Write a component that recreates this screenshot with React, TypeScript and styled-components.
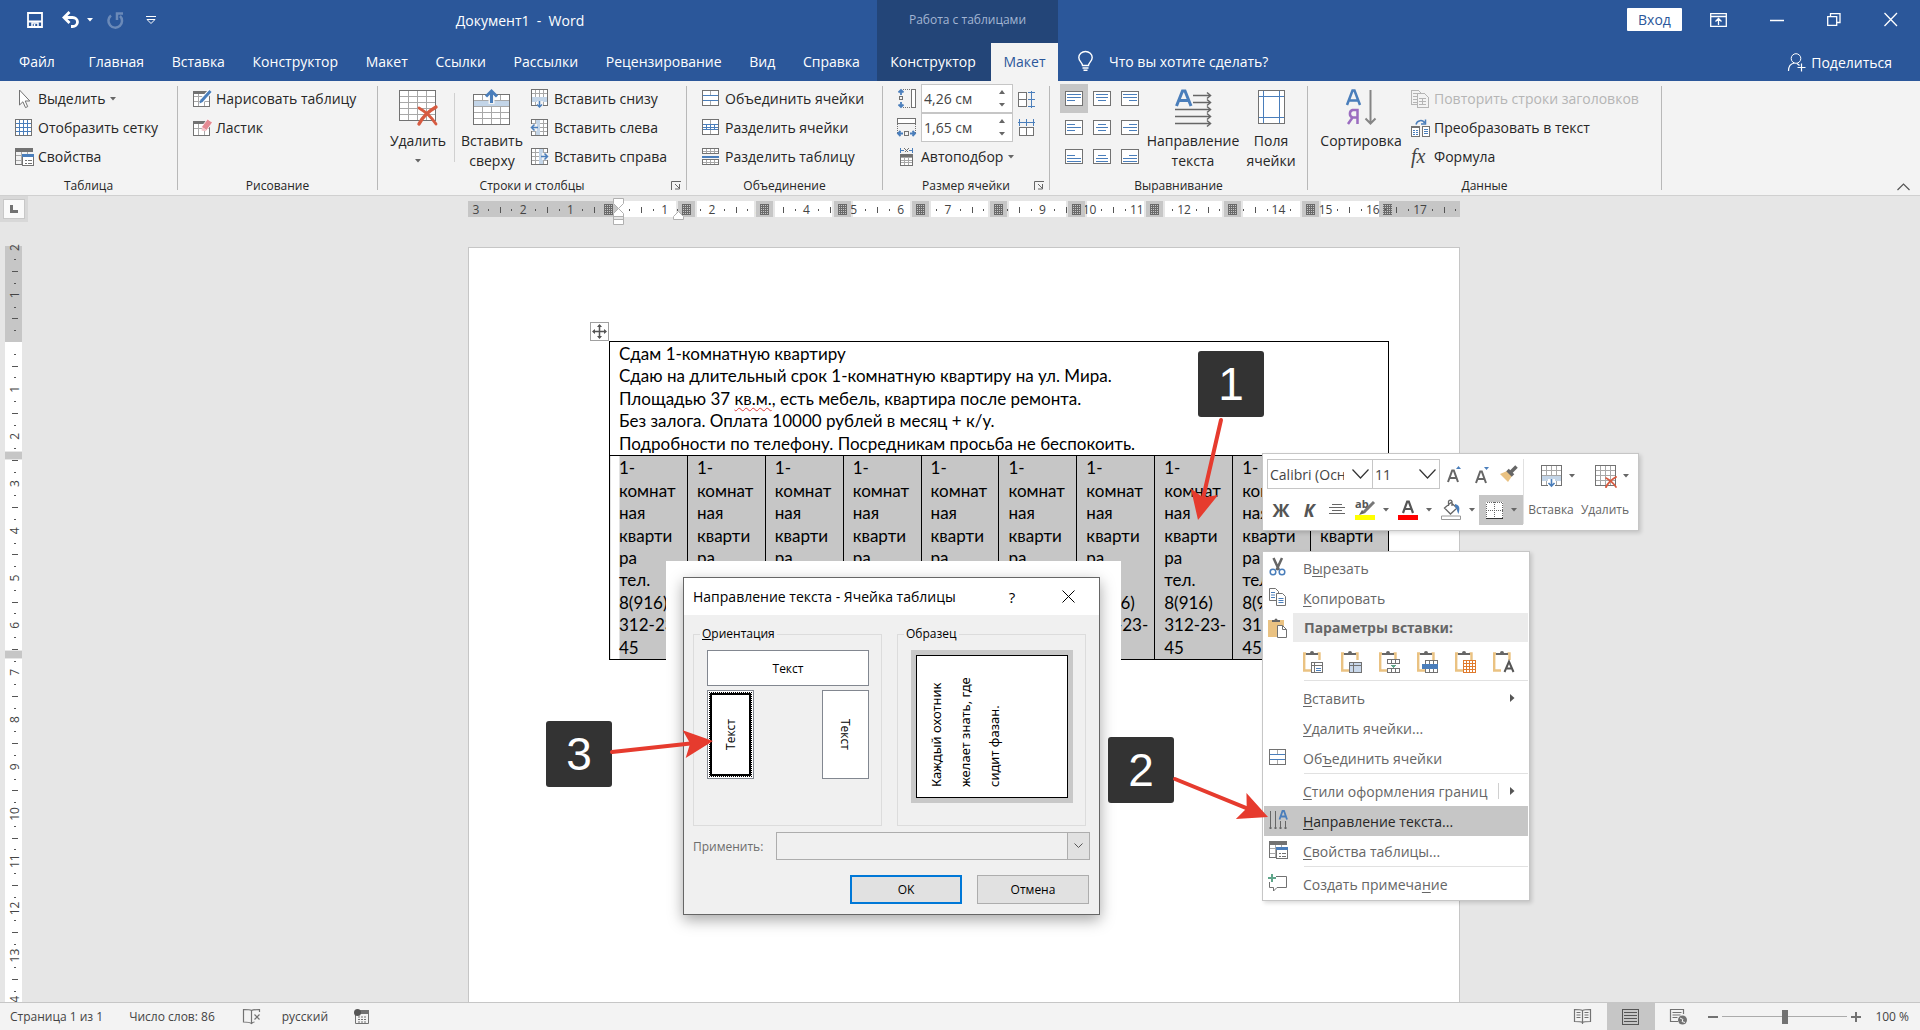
import React from "react";
import styled, { createGlobalStyle, css } from "styled-components";

const GREY = "#727272";
const LIGHT = "#a8a8a8";
const BLUE = "#4a7ebb";
const SANS = "'Open Sans', 'Noto Sans', sans-serif";

const GlobalStyle = createGlobalStyle`
  * { box-sizing: border-box; }
  body { margin: 0; background: #e6e6e6; font-family: ${SANS}; font-size: 14px; color: #262626; }
  button, input, select { font: inherit; color: inherit; margin: 0; }
  button { padding: 0; border: 0; background: none; cursor: default; }
  fieldset { margin: 0; min-width: 0; }
`;

/* ---------- icon helpers ---------- */

const Svg = styled.svg`
  display: block;
  flex: none;
  overflow: visible;
  fill: none;
`;

type IconProps = { w: number; h: number; children: React.ReactNode; crisp?: boolean };
const Icon = ({ w, h, children, crisp }: IconProps) => (
  <Svg width={w} height={h} viewBox={`0 0 ${w} ${h}`} shapeRendering={crisp ? "crispEdges" : undefined} aria-hidden>
    {children}
  </Svg>
);

/** Table outline with evenly spaced inner rules. */
const Cells = ({ x = 0, y = 0, w, h, c, r, fill = "#fff", inner = LIGHT, outer = GREY }: {
  x?: number; y?: number; w: number; h: number; c: number; r: number; fill?: string; inner?: string; outer?: string;
}) => {
  let d = "";
  for (let i = 1; i < c; i++) d += `M${x + Math.round(((w - 1) * i) / c) + 0.5} ${y}v${h}`;
  for (let i = 1; i < r; i++) d += `M${x} ${y + Math.round(((h - 1) * i) / r) + 0.5}h${w}`;
  return (
    <>
      <rect x={x + 0.5} y={y + 0.5} width={w - 1} height={h - 1} fill={fill} />
      <path d={d} stroke={inner} />
      <rect x={x + 0.5} y={y + 0.5} width={w - 1} height={h - 1} stroke={outer} />
    </>
  );
};

const Caret = ({ color = "#666" }: { color?: string }) => (
  <Icon w={6} h={4}><path d="M0 0h6L3 3.6z" fill={color} /></Icon>
);
const CursorIcon = () => (
  <Icon w={18} h={20}><path d="M4.500 1v15l3.400-3.200 2.600 5.800 2.200-1-2.500-5.600h4.600z" fill="#fff" stroke={GREY} /></Icon>
);
const GridIcon = () => <Icon w={18} h={18} crisp><Cells w={17} h={17} c={4} r={4} inner={BLUE} /></Icon>;
const PropsIcon = () => (
  <Icon w={19} h={18} crisp>
    <path d="M.5 1v15.500h8M1 7.500h7M1 12h7M6 4v12M12 3v3" stroke={LIGHT} />
    <path d="M.5 1v15.500h6" stroke={GREY} />
    <path d="M0 0h18v4H0z" fill={GREY} />
    <path d="M7.500 6.500h11v11h-11z" fill="#fff" stroke={GREY} />
    <path d="M7 6h12v3H7z" fill={BLUE} />
    <path d="M10 12h2M13 12h4M10 15h2M13 15h4" stroke={GREY} strokeWidth="1" />
  </Icon>
);
const DrawIcon = () => (
  <Icon w={19} h={18}>
    <g shapeRendering="crispEdges">
      <Cells y={1} w={17} h={16} c={3} r={3} />
      <path d="M0 1h17v3H0z" fill={GREY} />
    </g>
    <path d="M17.500 1 8.500 11" stroke="#fff" strokeWidth="5" />
    <path d="M17.500 1 8.500 11" stroke={BLUE} strokeWidth="3" />
    <path d="M6.500 13.500l1-4 2.700 2.200z" fill={BLUE} />
  </Icon>
);
const EraserIcon = () => (
  <Icon w={19} h={18}>
    <g shapeRendering="crispEdges">
      <Cells y={2} w={17} h={15} c={3} r={2} />
      <path d="M0 2h12v3H0z" fill={GREY} />
    </g>
    <path d="M8.500 8 14.500 0l5 3.500-6 8z" fill="#e58a93" stroke="#fff" strokeWidth=".8" />
    <path d="M9 8l4.500 3-1 1.200-4-.7z" fill="#f3c3c8" />
  </Icon>
);
const RedX = ({ x, y, s }: { x: number; y: number; s: number }) => (
  <g stroke="#d75b41" strokeLinecap="round">
    <path d={`M${x} ${y + 1}Q${x + s * 0.6} ${y + s * 0.4} ${x + s} ${y + s}`} strokeWidth={s / 6} />
    <path d={`M${x + s} ${y}Q${x + s * 0.3} ${y + s * 0.4} ${x} ${y + s}`} strokeWidth={s / 5} />
  </g>
);
const DeleteTableIcon = () => (
  <Icon w={38} h={38}>
    <g shapeRendering="crispEdges"><Cells y={1} w={37} h={31} c={4} r={5} /></g>
    <RedX x={20} y={18} s={17} />
  </Icon>
);
const InsertAboveIcon = () => (
  <Icon w={38} h={38} crisp>
    <Cells y={5} w={37} h={31} c={4} r={5} />
    <path d="M1 12h35v5H1z" fill="#c3d5e8" />
    <g shapeRendering="auto">
      <path d="M18.500 15V3" stroke="#f3f3f3" strokeWidth="6" />
      <path d="M18.500 14V2M13 7.500 18.500 2l5.500 5.500" stroke={BLUE} strokeWidth="3" />
    </g>
  </Icon>
);
const InsertBelowIcon = () => (
  <Icon w={18} h={19} crisp>
    <Cells w={17} h={17} c={4} r={4} />
    <path d="M1 8h15v5H1z" fill="#c3d5e8" />
    <path d="M6 12h6v7H6z" fill="#f3f3f3" />
    <path d="M8.500 12v6M6 15.500l2.500 2.500 2.500-2.500" stroke={BLUE} strokeWidth="1.500" shapeRendering="auto" />
  </Icon>
);
const InsertSideIcon = ({ flip }: { flip?: boolean }) => (
  <Icon w={18} h={18} crisp>
    <g transform={flip ? "translate(17 0) scale(-1 1)" : undefined}>
      <Cells w={17} h={17} c={4} r={4} />
      <path d="M5 1h4v15H5z" fill="#c3d5e8" />
      <path d="M0 5h6v7H0z" fill="#f3f3f3" />
      <path d="M7 8.500H.500M3.500 5.500l-3 3 3 3" stroke={BLUE} strokeWidth="1.500" shapeRendering="auto" />
    </g>
  </Icon>
);
const MergeIcon = () => (
  <Icon w={18} h={17} crisp>
    <path d="M.5.5h16v15H.5z" fill="#fff" stroke={GREY} />
    <path d="M8.500 1v4M8.500 11v4" stroke={LIGHT} />
    <path d="M1 5.500h15M1 10.500h15" stroke={BLUE} />
  </Icon>
);
const SplitIcon = () => (
  <Icon w={18} h={17} crisp>
    <path d="M.5.5h16v15H.5z" fill="#fff" stroke={GREY} />
    <path d="M8.500 1v4M8.500 11v4" stroke={LIGHT} />
    <path d="M1 5.500h15M1 10.500h15M4.500 6v4M8.500 6v4M12.500 6v4M1 8h15" stroke={BLUE} />
  </Icon>
);
const SplitTableIcon = () => (
  <Icon w={18} h={17} crisp>
    <Cells w={17} h={6} c={4} r={2} /><Cells y={11} w={17} h={6} c={4} r={2} />
    <path d="M0 8.500h17" stroke={BLUE} strokeWidth="2" />
  </Icon>
);
const RowHeightIcon = () => (
  <Icon w={19} h={19} crisp>
    <path d="M14.500.5h4v18h-4z" fill="#fff" stroke={GREY} />
    <path d="M6 .5h8M6 18.500h8" stroke={GREY} strokeDasharray="1 1" />
    <path d="M2.500 7.500h3v3h-3z" stroke={GREY} />
    <path d="M4 6V1M4 13v5M1.500 3.500 4 1l2.500 2.500M1.500 15.500 4 18l2.500-2.500" stroke={BLUE} strokeWidth="1.800" shapeRendering="auto" />
  </Icon>
);
const ColWidthIcon = () => (
  <Icon w={19} h={19} crisp>
    <path d="M.5.500h18v5H.5z" fill="#fff" stroke={GREY} />
    <path d="M.5 6v9M18.500 6v9" stroke={GREY} strokeDasharray="1 1" />
    <path d="M7.500 13.500h4v4h-4z" stroke={GREY} />
    <path d="M6 15.500H1M13 15.500h5M3.500 13 1 15.500 3.500 18M15.500 13l2.500 2.500-2.500 2.500" stroke={BLUE} strokeWidth="1.800" shapeRendering="auto" />
  </Icon>
);
const AutofitIcon = () => (
  <Icon w={19} h={18} crisp>
    <path d="M3.500 0v5M15.500 0v5M4 2.500h3M12 2.500h3" stroke={BLUE} />
    <path d="M7.500.5l4 4M11.500.5l-4 4" stroke={GREY} />
    <Cells x={3} y={6} w={13} h={12} c={3} r={4} />
    <path d="M3 6h13v3H3z" fill={GREY} />
  </Icon>
);
const DistRowsIcon = () => (
  <Icon w={17} h={18} crisp>
    <path d="M.5 2.500h8v14h-8zM.5 9.500h8" fill="#fff" stroke={GREY} />
    <path d="M13.500 1v17M10 2.500h7M10 9.500h7M10 16.500h7" stroke={BLUE} />
  </Icon>
);
const DistColsIcon = () => (
  <Icon w={17} h={18} crisp>
    <path d="M1.500 8.500h14v8h-14zM8.500 8.500v8" fill="#fff" stroke={GREY} />
    <path d="M0 3.500h17M1.500 0v7M8.500 0v7M15.500 0v7" stroke={BLUE} />
  </Icon>
);

/** Line lengths and the first line's height for the top, middle and bottom rows. */
const ALIGN_LINES = [[14, 14, 8], [8, 14, 8], [8, 14, 14]];
const ALIGN_TOP = [3.5, 4.5, 6.5];
const AlignIcon = ({ col, row }: { col: number; row: number }) => (
  <Icon w={18} h={15} crisp>
    <path d="M.5.5h17v14H.5z" fill="#fff" stroke={GREY} />
    {ALIGN_LINES[row].map((l, i) => {
      const len = col === 1 && l === 14 ? 12 : l;
      const x = [2, (18 - len) / 2, 16 - len][col];
      return <path key={i} d={`M${x} ${ALIGN_TOP[row] + i * 3 - (i === 2 ? 0 : 0)}h${len}`} stroke={BLUE} />;
    })}
  </Icon>
);
const TextDirIcon = () => (
  <Icon w={37} h={37}>
    <path d="M1.500 17 7.500 2h2.500L16 17M4 11.500h9.500" stroke={BLUE} strokeWidth="3" />
    <path d="M18 6.500h17M18 13.500h17M0 20.500h35M0 27.500h35M0 34.500h35" stroke="#666" strokeWidth="1.500" />
    <path d="M32 3.500l3.500 3-3.500 3M32 10.500l3.500 3-3.500 3M32 17.500l3.500 3-3.500 3M32 24.500l3.500 3-3.500 3M32 31.500l3.500 3-3.500 3" stroke="#666" strokeWidth="1.500" />
  </Icon>
);
const MarginsIcon = () => (
  <Icon w={27} h={35} crisp>
    <path d="M.5.5h26v33H.5z" fill="#fff" stroke={GREY} />
    <path d="M5.500 1v32M21.500 1v32M1 6.500h25M1 27.500h25" stroke={BLUE} />
  </Icon>
);
const SortIcon = () => (
  <Icon w={30} h={37}>
    <path d="M1 16 6.500 1.500h2L14 16M3.500 11.500h8" stroke={BLUE} strokeWidth="2.500" />
    <path d="M11.500 35V21H6.500a4 4 0 0 0 0 7.500h5M6.500 28.500 2 35" stroke="#9b6cc0" strokeWidth="2.500" />
    <path d="M24.500 1v33M19.500 29.500l5 5 5-5" stroke="#858585" strokeWidth="2" />
  </Icon>
);
const RepeatIcon = () => (
  <Icon w={18} h={18} crisp>
    <path d="M.5.5h7l3 3v11H.5z" fill="#f3f3f3" stroke="#b5b5b5" />
    <path d="M2 3.500h5M2 6.500h4M2 9.500h4M2 12.500h4" stroke="#b5b5b5" />
    <path d="M6.500 3.500h7l4 4v10h-11z" fill="#f3f3f3" stroke="#b5b5b5" />
    <path d="M8 8.500h7M8 11.500h7M8 14.500h7M11.500 8v7" stroke="#b5b5b5" />
  </Icon>
);
const ConvertIcon = () => (
  <Icon w={19} h={18}>
    <path d="M5 5.500C6 .8 12 .5 13.500 4M14.500.5V5h-4.500" stroke={BLUE} strokeWidth="1.500" />
    <g shapeRendering="crispEdges">
      <path d="M.5 7.500h8v10h-8zM11.500 7.500h7v10h-7z" fill="#fff" stroke={GREY} />
      <path d="M0 7h9v2H0z" fill={GREY} />
      <path d="M2 11.500h2M5 11.500h2M2 13.500h2M5 13.500h2M2 15.500h2M5 15.500h2M13 10.500h4M13 12.500h4M13 14.500h4" stroke={BLUE} />
    </g>
  </Icon>
);
const LauncherIcon = () => (
  <Icon w={10} h={9}><path d="M.5 9V.5H10M4 3l4.500 4.500M8.500 3v5H4" stroke="#666" /></Icon>
);
const ScissorsIcon = () => (
  <Icon w={19} h={20}>
    <path d="M4.500 1l5.500 12M13 1 7.500 13" stroke="#666" strokeWidth="2.500" />
    <circle cx="4" cy="15" r="2.800" stroke={BLUE} strokeWidth="1.500" />
    <circle cx="13" cy="15" r="2.800" stroke={BLUE} strokeWidth="1.500" />
  </Icon>
);
const CopyIcon = () => (
  <Icon w={19} h={19}>
    <path d="M.5.5h6l3 3v9h-9z" fill="#fff" stroke={GREY} />
    <path d="M2 4.500h4M2 7h4M2 9.500h4" stroke={BLUE} />
    <path d="M7.500 5.500h6l3 3v9h-9z" fill="#fff" stroke={GREY} />
    <path d="M9.500 10.500h5M9.500 12.500h5M9.500 14.500h5" stroke={BLUE} />
  </Icon>
);
const PasteIcon = () => (
  <Icon w={19} h={20}>
    <path d="M0 2h16v17H0z" fill="#eac282" />
    <path d="M4 4V2h2.500a1.500 1.500 0 0 1 3 0H12v2z" fill="#666" />
    <path d="M9.500 7.500h5l4 4v8h-9z" fill="#fff" stroke={GREY} />
    <path d="M14.500 7.500v4h4" stroke={GREY} />
  </Icon>
);
const PasteOption = ({ kind }: { kind: number }) => (
  <Icon w={21} h={23}>
    <path d="M3 3.500H1.200v17H8M14.500 3.500h2V10" stroke="#eac282" strokeWidth="2.400" />
    <path d="M3 5V3h4a2 2 0 0 1 4 0h4v2z" fill="#666" />
    <g shapeRendering="crispEdges">
      {kind === 0 && <><path d="M8.500 12.500h11v10h-11z" fill="#fff" stroke={GREY} /><path d="M9 15.500h10M11.500 13v9" stroke={GREY} /><path d="M13 18h5M13 20.500h5" stroke={BLUE} /></>}
      {kind === 1 && <><path d="M8.500 12.500h12v10h-12z" fill="#c8d7ea" stroke={GREY} /><path d="M9 15.500h11M12.500 13v9" stroke={GREY} /></>}
      {kind === 2 && <><Cells x={8} y={9} w={13} h={5} c={3} r={1} inner={GREY} /><Cells x={8} y={18} w={13} h={5} c={3} r={1} inner={GREY} /><path d="M12 15h5l-2.500 3z" fill="#5fa58a" /></>}
      {kind === 3 && <><Cells x={8} y={10} w={13} h={13} c={3} r={3} inner={GREY} /><path d="M5 14h16v5H5z" fill={BLUE} /></>}
      {kind === 4 && <Cells x={8} y={10} w={13} h={13} c={4} r={4} inner="#e07b2e" outer="#e07b2e" />}
    </g>
    {kind === 5 && <><path d="M9 10h12v13H9z" fill="#fff" /><path d="M11.500 22 16 11.500 20.500 22M13 18.500h6" stroke="#555" strokeWidth="2" /></>}
  </Icon>
);
const TextDirMenuIcon = () => (
  <Icon w={19} h={20}>
    <path d="M10.500 9.500l3-8.500h1.500l3 8.500M12 6.500h5" stroke={BLUE} strokeWidth="1.800" />
    <path d="M1.500 1v18M6.500 1v18M11.500 11v8M16.500 11v8M0 18h3M5 18h3M10 18h3M15 18h3" stroke="#666" />
  </Icon>
);
const CommentIcon = () => (
  <Icon w={20} h={19}>
    <path d="M7 2.500h10.500v11H8L4.500 17v-3.500h-4V8" stroke={GREY} />
    <path d="M3 0v8M-1 4h8" stroke="#5fa58a" strokeWidth="2" />
  </Icon>
);

/* ---------- header ---------- */

const Window = styled.div`
  display: flex;
  flex-direction: column;
  height: 100vh;
  overflow: hidden;
  background: #e6e6e6;
`;
const Header = styled.header`
  display: grid;
  grid-template-columns: 877px 181px 1fr;
  grid-template-rows: 43px 38px;
  flex: none;
  background: #2b579a;
  color: #fff;
`;
const TitleLeft = styled.div`
  display: flex;
  align-items: center;
  padding-bottom: 3px;
`;
const QuickAccess = styled.div`
  display: flex;
  align-items: center;
  width: 163px;
  padding-left: 27px;
  button + button { margin-left: 22px; }
`;
const UndoButton = styled.button`
  display: flex;
  align-items: center;
  gap: 7px;
  && { margin-left: 19px; }
`;
const RedoButton = styled.button`
  opacity: 0.3;
  && { margin-left: 14px; }
`;
const DocTitle = styled.h1`
  flex: 1;
  margin: 0;
  font-size: 14px;
  font-weight: 400;
  text-align: center;
  white-space: pre;
`;
const ContextTitle = styled.div`
  background: #234578;
  color: #a3b6d3;
  font-size: 12px;
  line-height: 40px;
  text-align: center;
`;
const WindowBar = styled.div`
  display: flex;
  align-items: center;
  justify-content: flex-end;
  gap: 43px;
  padding: 0 22px 4px 0;
`;
const SignIn = styled.button`
  width: 55px;
  height: 23px;
  margin-right: -15px;
  border-radius: 1px;
  background: #fff;
  color: #2b579a;
`;
const Tabs = styled.nav`
  display: flex;
  justify-content: space-between;
  padding: 0 17px 2px 19px;
`;
const ContextTabs = styled.nav`
  display: flex;
  background: #234578;
`;
const Tab = styled.button<{ $active?: boolean; $file?: boolean; $grow?: boolean }>`
  white-space: nowrap;
  ${(p) => p.$file && css`margin-right: 6px;`}
  ${(p) => p.$grow && css`flex: 1; padding: 0 2px 2px 0;`}
  ${(p) => p.$active && css`
    width: 67px;
    padding-bottom: 2px;
    background: #f3f3f3;
    color: #2b579a;
  `}
`;
const HelpBar = styled.div`
  display: flex;
  align-items: center;
  justify-content: space-between;
  padding: 0 28px 2px 20px;
`;
const TellMe = styled.label`
  display: flex;
  align-items: center;
  gap: 16px;
`;
const TellMeInput = styled.input`
  width: 200px;
  padding: 0;
  border: 0;
  background: none;
  &::placeholder { color: #fff; opacity: 1; }
`;
const Share = styled.button`
  display: flex;
  align-items: center;
  gap: 5px;
  padding-top: 2px;
`;

/* ---------- ribbon ---------- */

const Ribbon = styled.div`
  display: flex;
  flex: none;
  height: 115px;
  background: #f3f3f3;
  border-bottom: 1px solid #d0d0d0;
  white-space: nowrap;
`;
const Divider = styled.span`
  flex: none;
  width: 1px;
  margin: 5px 0;
  background: #b8b8b8;
`;
const InnerDivider = styled.span`
  width: 1px;
  margin: 9px 4px 10px;
  background: #d0d0d0;
`;
const Group = styled.section<{ $w: number }>`
  display: flex;
  flex-direction: column;
  flex: none;
  width: ${(p) => p.$w}px;
  padding-top: 3px;
`;
const GroupBody = styled.div<{ $pad: number }>`
  display: flex;
  height: 88px;
  padding-left: ${(p) => p.$pad}px;
`;
const GroupFoot = styled.div`
  display: flex;
  align-items: center;
  height: 23px;
  padding-top: 3px;
  font-size: 12px;
`;
const GroupName = styled.span`
  flex: 1;
  text-align: center;
`;
const Launcher = styled.button`
  width: 10px;
  margin: 0 5px 0 -15px;
`;
const Column = styled.div<{ $ml?: number }>`
  display: grid;
  grid-auto-rows: 29px;
  margin-left: ${(p) => p.$ml ?? 0}px;
`;
const Command = styled.button`
  display: flex;
  align-items: center;
  gap: 5px;
  text-align: left;
  &:disabled { color: #b5b5b5; }
`;
const IconSlot = styled.span`
  display: flex;
  width: 18px;
`;
const Fx = styled.span`
  width: 18px;
  color: #444;
  font: italic 20px 'Liberation Serif', serif;
`;
const Big = styled.button<{ $w: number }>`
  display: flex;
  flex-direction: column;
  align-items: center;
  width: ${(p) => p.$w}px;
  height: 88px;
  line-height: 20px;
`;
const BigIcon = styled.span`
  display: flex;
  align-items: center;
  height: 47px;
`;
const BigCaret = styled.span`
  padding-top: 8px;
`;
const SizeGrid = styled.div`
  display: grid;
  grid-template-columns: 19px 92px 17px;
  grid-auto-rows: 29px;
  column-gap: 5px;
  align-items: center;
`;
const Spin = styled.span`
  display: flex;
  height: 29px;
  border: 1px solid #c6c6c6;
  background: #fff;
`;
const SpinInput = styled.input`
  width: 70px;
  padding: 0 2px;
  border: 0;
  color: #444;
  background: none;
`;
const SpinButtons = styled.span`
  display: flex;
  flex: 1;
  flex-direction: column;
  align-items: center;
  justify-content: space-evenly;
  button { display: grid; place-items: center; width: 16px; height: 12px; }
`;
const AutofitButton = styled.button`
  display: flex;
  grid-column: 2 / 4;
  align-items: center;
  gap: 5px;
`;
const AlignGrid = styled.div`
  display: grid;
  grid-template-columns: repeat(3, 28px);
  grid-auto-rows: 29px;
`;
const AlignButton = styled.button<{ $on: boolean }>`
  display: grid;
  place-items: center;
  padding-bottom: 1px;
  background: ${(p) => (p.$on ? "#c6c6c6" : "none")};
`;
const Collapse = styled.button`
  align-self: flex-end;
  margin: 0 10px 4px auto;
`;

/* ---------- workspace ---------- */

const RulerRow = styled.div`
  display: flex;
  flex: none;
  height: 30px;
  padding-right: 20px;
`;
const TabCorner = styled.button`
  display: grid;
  flex: none;
  width: 28px;
  height: 26px;
  padding: 0 1px;
  place-items: center;
  background: #d8d8d8;
  span { display: grid; place-items: center; width: 22px; height: 20px; background: #fafafa; border: 1px solid #c8c8c8; }
`;
const RulerHolder = styled.div`
  display: flex;
  flex: 1;
  justify-content: center;
`;
const Work = styled.div`
  display: flex;
  flex: 1;
  min-height: 0;
  overflow: hidden;
`;
const SideRuler = styled.div`
  flex: none;
  width: 28px;
  padding-top: 20px;
`;
const Canvas = styled.main`
  display: flex;
  flex: 1;
  justify-content: center;
  padding: 22px 20px 0 0;
`;
const Sheet = styled.div`
  position: relative;
  width: 990px;
  padding: 93px 70px 0 140px;
  background: #fff;
  box-shadow: 0 0 0 1px #c6c6c6;
`;
const MoveHandle = styled.button`
  position: absolute;
  top: 74px;
  left: 121px;
  display: grid;
  place-items: center;
  width: 19px;
  height: 19px;
  border: 1px solid #a0a0a0;
  background: #fff;
`;
const DocTable = styled.table`
  width: 100%;
  table-layout: fixed;
  border-collapse: collapse;
  color: #000;
  font-family: Lato, 'Open Sans', sans-serif;
  font-size: 17px;
  line-height: 1.32;
  td { padding: 1px 9px 0; border: 1px solid #000; vertical-align: top; white-space: nowrap; }
`;
const Selected = styled.td<{ $first: boolean }>`
  background: ${(p) => (p.$first ? "linear-gradient(90deg, #fff 9px, #c6c6c6 9px)" : "#c6c6c6")};
`;
const Misspelt = styled.span`
  text-decoration: underline wavy #e03a3a 1px;
  text-underline-offset: 2px;
  text-decoration-skip-ink: none;
`;

const TICK = 47.2;
const HRuler = () => {
  const marks: React.ReactNode[] = [];
  for (let q = -12; q <= 71; q++) {
    const x = 617.6 + (q * TICK) / 4;
    if (q === 0 || x < 470) continue;
    if (q % 4 === 0) marks.push(<text key={q} x={x} y={214} textAnchor="middle" fontSize="12" fill="#444">{Math.abs(q / 4)}</text>);
    else if (q % 2 === 0) marks.push(<path key={q} d={`M${Math.round(x) + 0.5} 207v6`} stroke="#555" />);
    else marks.push(<path key={q} d={`M${Math.round(x) + 0.5} 209v2`} stroke="#555" />);
  }
  const stops = Array.from({ length: 9 }, (_, i) => 678 + i * 78);
  return (
    <Svg width="992" height="30" viewBox="468 196 992 30" fontFamily={SANS} aria-label="Линейка">
      <defs>
        <pattern id="mesh" width="2" height="2" patternUnits="userSpaceOnUse">
          <path d="M0 0h2v1H0zM0 1h1v1H0z" fill="#6a6a6a" />
        </pattern>
      </defs>
      <path d="M468 201h150v16H468zM1379 201h81v16h-81z" fill="#c6c6c6" />
      <path d="M618 201h761v16H618z" fill="#fff" />
      {stops.map((x) => <path key={x} d={`M${x - 2} 201h21v16h-21z`} fill="#e6e6e6" />)}
      {marks}
      {stops.map((x) => (
        <g key={x}>
          <path d={`M${x} 201h17v16h-17z`} fill="#c6c6c6" />
          <path d={`M${x + 4} 204h9v11h-9z`} fill="url(#mesh)" />
        </g>
      ))}
      <path d="M604 204h9v11h-9zM1383 204h9v11h-9z" fill="url(#mesh)" />
      <path d="M613.500 198.500h10v5l-5 5-5-5zM618.500 208.500l5 5v3h-10v-3zM613.500 219.500h10v5h-10zM613.500 216v4M623.500 216v4M678.500 211.500l5 5v3h-10v-3z" fill="#fff" stroke="#b0b0b0" />
    </Svg>
  );
};
const VRuler = () => {
  const marks: React.ReactNode[] = [];
  for (let q = -8; q <= 56; q++) {
    const y = 342 + (q * TICK) / 4;
    if (q === 0) continue;
    if (q % 4 === 0) marks.push(<text key={q} transform={`translate(19 ${y}) rotate(-90)`} textAnchor="middle" fontSize="12" fill="#444">{Math.abs(q / 4)}</text>);
    else if (q % 2 === 0) marks.push(<path key={q} d={`M12 ${Math.round(y) + 0.5}h6`} stroke="#555" />);
    else marks.push(<path key={q} d={`M14 ${Math.round(y) + 0.5}h2`} stroke="#555" />);
  }
  return (
    <Svg width="28" height="756" viewBox="0 246 28 756" fontFamily={SANS} aria-label="Вертикальная линейка">
      <path d="M5 246h17v96H5z" fill="#c6c6c6" />
      <path d="M5 342h17v660H5z" fill="#fff" />
      {marks}
      <path d="M5 451h17v9H5zM5 650h17v9H5z" fill="#e6e6e6" />
      <path d="M5 452h17v7H5zM5 651h17v7H5z" fill="#c6c6c6" />
    </Svg>
  );
};

/* ---------- mini toolbar ---------- */

const Mini = styled.div`
  position: absolute;
  top: 205px;
  left: 793px;
  z-index: 2;
  display: flex;
  width: 377px;
  height: 78px;
  padding: 5px 4px 6px;
  border: 1px solid #c6c6c6;
  background: #fff;
  box-shadow: 2px 2px 4px rgba(0, 0, 0, 0.15);
`;
const MiniLeft = styled.div`
  width: 257px;
  border-right: 1px solid #e1e1e1;
`;
const MiniRow = styled.div`
  display: flex;
  align-items: center;
  height: 30px;
  & + & { margin-top: 6px; }
`;
const Combo = styled.label<{ $w: number }>`
  display: grid;
  align-items: center;
  width: ${(p) => p.$w}px;
  height: 30px;
  border: 1px solid #c6c6c6;
  & + & { margin-left: -1px; }
  > * { grid-area: 1 / 1; }
  svg { justify-self: end; margin-right: 3px; pointer-events: none; }
`;
const ComboSelect = styled.select`
  width: 100%;
  padding: 0 28px 0 2px;
  border: 0;
  background: none;
  color: #444;
  appearance: none;
`;
const MiniTool = styled.button<{ $w: number; $on?: boolean }>`
  display: flex;
  align-items: center;
  justify-content: center;
  gap: 8px;
  width: ${(p) => p.$w}px;
  height: 30px;
  color: #555;
  font-size: 18px;
  background: ${(p) => (p.$on ? "#c6c6c6" : "none")};
  b { font-weight: 700; }
`;
const MiniBig = styled.button`
  display: flex;
  flex-direction: column;
  align-items: center;
  justify-content: space-between;
  width: 54px;
  padding: 6px 0 5px;
  color: #666;
  font-size: 12px;
  line-height: 18px;
  span { display: flex; align-items: center; gap: 6px; padding-left: 13px; }
`;
const Chevron = () => (
  <Icon w={17} h={10}><path d="M.5.5l8 8.500 8-8.500" stroke="#333" strokeWidth="1.200" /></Icon>
);

/* ---------- context menu ---------- */

const Menu = styled.div`
  position: absolute;
  top: 303px;
  left: 793px;
  z-index: 2;
  width: 268px;
  padding: 1px;
  border: 1px solid #c6c6c6;
  background: #fff;
  color: #666;
  box-shadow: 2px 2px 4px rgba(0, 0, 0, 0.15);
`;
const MenuItem = styled.button<{ $hot?: boolean }>`
  display: flex;
  align-items: center;
  width: 100%;
  height: 30px;
  padding: 0 13px 0 5px;
  text-align: left;
  color: ${(p) => (p.$hot ? "#262626" : "inherit")};
  background: ${(p) => (p.$hot ? "#c6c6c6" : "none")};
  u { text-underline-offset: 2px; }
`;
const MenuIcon = styled.span`
  flex: none;
  width: 34px;
  padding-bottom: 2px;
`;
const MenuText = styled.span`
  flex: 1;
  white-space: nowrap;
`;
const MenuHead = styled.div`
  display: flex;
  align-items: center;
  height: 29px;
  padding-left: 4px;
`;
const MenuHeadText = styled.strong`
  flex: 1;
  padding-left: 11px;
  background: #ebebeb;
  font-family: 'Noto Sans', sans-serif;
  line-height: 29px;
`;
const MenuHeadIcon = styled.span`
  width: 25px;
`;
const PasteRow = styled.div`
  display: flex;
  align-items: center;
  gap: 17px;
  height: 38px;
  padding-left: 39px;
`;
const MenuRule = styled.hr`
  height: 1px;
  margin: 0 0 2px 40px;
  border: 0;
  background: #e1e1e1;
`;
const SplitMark = styled.span`
  width: 1px;
  height: 16px;
  margin-right: 11px;
  background: #d0d0d0;
`;
const SubArrow = () => <Icon w={5} h={8}><path d="M0 0l4.500 4L0 8z" fill="#555" /></Icon>;

/* ---------- dialog ---------- */

const Backdrop = styled.div`
  position: absolute;
  top: 313px;
  left: 197px;
  z-index: 1;
  padding: 16px 21px 10px 17px;
  background: #fff;
`;
const Dialog = styled.form`
  width: 417px;
  border: 1px solid #666;
  background: #f0f0f0;
  color: #000;
  font-size: 12px;
  box-shadow: 0 5px 14px rgba(0, 0, 0, 0.35);
`;
const DialogTitle = styled.div`
  display: flex;
  align-items: center;
  height: 37px;
  padding: 0 24px 0 9px;
  background: #fff;
  font-size: 14px;
`;
const DialogName = styled.h2`
  flex: 1;
  margin: 0;
  font-size: 14px;
  font-weight: 400;
`;
const HelpButton = styled.button`
  width: 8px;
  margin-right: 46px;
  font-size: 15px;
`;
const DialogBody = styled.div`
  padding: 10px 9px;
`;
const Panels = styled.div`
  display: grid;
  grid-template-columns: 189px 189px;
  gap: 15px;
`;
const Panel = styled.fieldset`
  height: 201px;
  padding: 7px 12px 0 13px;
  border: 1px solid #dcdcdc;
  legend { margin-left: -7px; padding: 0 2px; line-height: 18px; }
`;
const WideChoice = styled.button`
  display: block;
  width: 100%;
  height: 36px;
  border: 1px solid #828790;
  background: #fff;
`;
const TallRow = styled.div`
  display: flex;
  justify-content: space-between;
  margin-top: 4px;
`;
const TallChoice = styled.button<{ $on?: boolean; $up?: boolean }>`
  display: grid;
  width: 47px;
  height: 89px;
  padding: 1px;
  border: 1px solid #828790;
  background: #fff;
  > span {
    display: grid;
    place-items: center;
    ${(p) => p.$on && css`
      border: 2px solid #000;
      outline: 1px dotted #000;
      margin: 1px;
    `}
  }
  > span > span {
    writing-mode: vertical-rl;
    transform: ${(p) => (p.$up ? "rotate(180deg)" : "none")};
  }
`;
const Sample = styled.div`
  height: 153px;
  padding: 5px;
  background: #c8c8c8;
`;
const SampleText = styled.p`
  width: 100%;
  height: 143px;
  margin: 0;
  padding: 10px 5px 0 0;
  border: 1px solid #000;
  background: #fff;
  font-family: 'Noto Sans', sans-serif;
  font-size: 13px;
  line-height: 29px;
  white-space: pre;
  writing-mode: vertical-rl;
  transform: rotate(180deg);
`;
const ApplyRow = styled.div`
  display: flex;
  align-items: center;
  justify-content: space-between;
  margin: 6px 0 15px;
  color: #6d6d6d;
`;
const ApplyBox = styled.div`
  display: grid;
  grid-template-columns: 1fr 22px;
  width: 314px;
  height: 28px;
  border: 1px solid #adadad;
  select { grid-area: 1 / 1 / 2 / 3; border: 0; background: none; appearance: none; opacity: 1; }
  span { grid-area: 1 / 2; display: grid; place-items: center; border-left: 1px solid #adadad; background: #e1e1e1; }
`;
const Actions = styled.div`
  display: flex;
  justify-content: flex-end;
  gap: 15px;
  padding-right: 1px;
`;
const Action = styled.button<{ $main?: boolean }>`
  width: 112px;
  height: 29px;
  border: ${(p) => (p.$main ? "2px solid #0078d7" : "1px solid #adadad")};
  background: #e1e1e1;
`;

/* ---------- annotations ---------- */

const Badge = styled.div<{ $x: number; $y: number }>`
  position: absolute;
  top: ${(p) => p.$y}px;
  left: ${(p) => p.$x}px;
  z-index: 3;
  width: 66px;
  height: 66px;
  border-radius: 3px;
  background: #333;
  color: #fff;
  font: 46px/66px 'Liberation Sans', Arial, sans-serif;
  text-align: center;
`;
const ArrowLayer = styled(Svg)`
  position: absolute;
  top: 172px;
  left: 142px;
  z-index: 3;
  pointer-events: none;
`;
const Arrow = ({ a, b }: { a: [number, number]; b: [number, number] }) => {
  const len = Math.hypot(b[0] - a[0], b[1] - a[1]);
  const angle = (Math.atan2(b[1] - a[1], b[0] - a[0]) * 180) / Math.PI;
  return (
    <g transform={`translate(${a[0]} ${a[1]}) rotate(${angle})`}>
      <path d={`M0 0H${len - 18}`} stroke="#e63b2e" strokeWidth="4" strokeLinecap="round" />
      <path d={`M${len} 0l-29-14 6 14-6 14z`} fill="#e63b2e" />
    </g>
  );
};

/* ---------- status bar ---------- */

const Status = styled.footer`
  display: flex;
  flex: none;
  align-items: center;
  height: 28px;
  padding: 0 11px 0 10px;
  border-top: 1px solid #c6c6c6;
  background: #f3f3f3;
  color: #444;
  font-size: 12px;
  white-space: nowrap;
`;
const StatusButton = styled.button<{ $ml?: number }>`
  margin-left: ${(p) => p.$ml ?? 0}px;
`;
const Spacer = styled.span`
  flex: 1;
`;
const ViewButton = styled.button<{ $on?: boolean }>`
  display: grid;
  place-items: center;
  width: 48px;
  height: 27px;
  background: ${(p) => (p.$on ? "#c6c6c6" : "none")};
`;
const Zoom = styled.div`
  display: flex;
  align-items: center;
  gap: 4px;
  margin: 0 14px 0 5px;
`;
const ZoomRange = styled.input`
  width: 125px;
  height: 14px;
  background: linear-gradient(#ababab, #ababab) center / 100% 1px no-repeat;
  appearance: none;
  &::-webkit-slider-thumb { appearance: none; width: 6px; height: 14px; background: #727272; }
`;

const DOC_LINES = ["1-", "комнат", "ная", "кварти", "ра", "тел.", "8(916)", "312-23-", "45"];
const SAMPLE = "Каждый охотник\nжелает знать, где\nсидит фазан.";

const Cmd = ({ icon, children, disabled }: { icon: React.ReactNode; children: React.ReactNode; disabled?: boolean }) => (
  <Command disabled={disabled}><IconSlot>{icon}</IconSlot>{children}</Command>
);

const Item = ({ icon, children, hot, after }: { icon?: React.ReactNode; children: React.ReactNode; hot?: boolean; after?: React.ReactNode }) => (
  <MenuItem $hot={hot}><MenuIcon>{icon}</MenuIcon><MenuText>{children}</MenuText>{after}</MenuItem>
);

const SpinBox = ({ value, label }: { value: string; label: string }) => (
  <Spin>
    <SpinInput aria-label={label} defaultValue={value} />
    <SpinButtons>
      <button type="button" aria-label="Больше"><Icon w={6} h={4}><path d="M0 4h6L3 0z" fill="#666" /></Icon></button>
      <button type="button" aria-label="Меньше"><Caret /></button>
    </SpinButtons>
  </Spin>
);

export default function App() {
  return (
    <Window>
      <GlobalStyle />
      <Header>
        <TitleLeft>
          <QuickAccess>
            <button aria-label="Сохранить">
              <Icon w={16} h={16}><path d="M1 1h14v14H1zM1 9.500h14" stroke="#fff" strokeWidth="1.800" /><path d="M5 15v-4h6v4M7.500 12v3" stroke="#fff" strokeWidth="1.500" /></Icon>
            </button>
            <UndoButton aria-label="Отменить">
              <Icon w={18} h={16}><path d="M2 5.500h8.500a5 4.500 0 0 1 0 9H9M7.500 0 2 5.500 7.500 11" stroke="#fff" strokeWidth="2.800" /></Icon>
              <Caret color="#fff" />
            </UndoButton>
            <RedoButton aria-label="Повторить">
              <Icon w={17} h={17}><path d="M4 3.500a6.800 6.800 0 1 0 9 .5M16 1.500H10V8" stroke="#fff" strokeWidth="2.500" /></Icon>
            </RedoButton>
            <button aria-label="Настроить панель">
              <Icon w={10} h={8}><path d="M0 .5h10M1 3.500h8L5 7.500z" stroke="#fff" /></Icon>
            </button>
          </QuickAccess>
          <DocTitle>{"Документ1  -  Word"}</DocTitle>
        </TitleLeft>
        <ContextTitle>Работа с таблицами</ContextTitle>
        <WindowBar>
          <SignIn>Вход</SignIn>
          <button aria-label="Параметры ленты"><Icon w={17} h={14}><path d="M.7.7h15.600v12.600H.7zM1 3.500h15M8.500 12V6M5.500 8.500l3-3 3 3" stroke="#fff" strokeWidth="1.300" /></Icon></button>
          <button aria-label="Свернуть"><Icon w={14} h={14}><path d="M0 7.500h14" stroke="#fff" strokeWidth="1.500" /></Icon></button>
          <button aria-label="Восстановить"><Icon w={14} h={13}><path d="M.7 3.700h9v8.600h-9zM3.500 3.500V.7h9.500V9.500H10" stroke="#fff" strokeWidth="1.300" /></Icon></button>
          <button aria-label="Закрыть"><Icon w={14} h={13}><path d="M.5 0l12.500 13M13 0 .5 13" stroke="#fff" strokeWidth="1.300" /></Icon></button>
        </WindowBar>
        <Tabs>
          <Tab $file>Файл</Tab>
          {["Главная", "Вставка", "Конструктор", "Макет", "Ссылки", "Рассылки", "Рецензирование", "Вид", "Справка"].map((t) => <Tab key={t}>{t}</Tab>)}
        </Tabs>
        <ContextTabs>
          <Tab $grow>Конструктор</Tab>
          <Tab $active>Макет</Tab>
        </ContextTabs>
        <HelpBar>
          <TellMe>
            <Icon w={15} h={20}><path d="M4.500 14.500c0-3-3.700-4-3.700-8a6.700 6 0 0 1 13.400 0c0 4-3.700 5-3.700 8zM4.500 17h6M5.500 19.300h4" stroke="#fff" strokeWidth="1.400" /></Icon>
            <TellMeInput placeholder="Что вы хотите сделать?" aria-label="Что вы хотите сделать?" />
          </TellMe>
          <Share>
            <Icon w={18} h={18}><circle cx="8" cy="5.500" r="4.800" stroke="#fff" /><path d="M.5 18c0-4.500 2.500-7.500 6-8M9 10.500l2.500 2M13.500 10.500v8M9.500 14.500h8" stroke="#fff" strokeWidth="1.200" /></Icon>
            Поделиться
          </Share>
        </HelpBar>
      </Header>

      <Ribbon>
        <Group $w={177}>
          <GroupBody $pad={15}>
            <Column>
              <Cmd icon={<CursorIcon />}>Выделить<Caret /></Cmd>
              <Cmd icon={<GridIcon />}>Отобразить сетку</Cmd>
              <Cmd icon={<PropsIcon />}>Свойства</Cmd>
            </Column>
          </GroupBody>
          <GroupFoot><GroupName>Таблица</GroupName></GroupFoot>
        </Group>
        <Divider />
        <Group $w={199}>
          <GroupBody $pad={15}>
            <Column>
              <Cmd icon={<DrawIcon />}>Нарисовать таблицу</Cmd>
              <Cmd icon={<EraserIcon />}>Ластик</Cmd>
            </Column>
          </GroupBody>
          <GroupFoot><GroupName>Рисование</GroupName></GroupFoot>
        </Group>
        <Divider />
        <Group $w={308}>
          <GroupBody $pad={8}>
            <Big $w={64}><BigIcon><DeleteTableIcon /></BigIcon>Удалить<BigCaret><Caret /></BigCaret></Big>
            <InnerDivider />
            <Big $w={66}><BigIcon><InsertAboveIcon /></BigIcon>Вставить<br />сверху</Big>
            <Column $ml={6}>
              <Cmd icon={<InsertBelowIcon />}>Вставить снизу</Cmd>
              <Cmd icon={<InsertSideIcon />}>Вставить слева</Cmd>
              <Cmd icon={<InsertSideIcon flip />}>Вставить справа</Cmd>
            </Column>
          </GroupBody>
          <GroupFoot><GroupName>Строки и столбцы</GroupName><Launcher aria-label="Строки и столбцы"><LauncherIcon /></Launcher></GroupFoot>
        </Group>
        <Divider />
        <Group $w={195}>
          <GroupBody $pad={15}>
            <Column>
              <Cmd icon={<MergeIcon />}>Объединить ячейки</Cmd>
              <Cmd icon={<SplitIcon />}>Разделить ячейки</Cmd>
              <Cmd icon={<SplitTableIcon />}>Разделить таблицу</Cmd>
            </Column>
          </GroupBody>
          <GroupFoot><GroupName>Объединение</GroupName></GroupFoot>
        </Group>
        <Divider />
        <Group $w={166}>
          <GroupBody $pad={14}>
            <SizeGrid>
              <RowHeightIcon /><SpinBox value="4,26 см" label="Высота" /><button aria-label="Выровнять высоту строк"><DistRowsIcon /></button>
              <ColWidthIcon /><SpinBox value="1,65 см" label="Ширина" /><button aria-label="Выровнять ширину столбцов"><DistColsIcon /></button>
              <AutofitIcon /><AutofitButton>Автоподбор<Caret /></AutofitButton>
            </SizeGrid>
          </GroupBody>
          <GroupFoot><GroupName>Размер ячейки</GroupName><Launcher aria-label="Размер ячейки"><LauncherIcon /></Launcher></GroupFoot>
        </Group>
        <Divider />
        <Group $w={257}>
          <GroupBody $pad={10}>
            <AlignGrid>
              {[0, 1, 2].map((row) => [0, 1, 2].map((col) => (
                <AlignButton key={`${row}${col}`} $on={row === 0 && col === 0} aria-label={`Выравнивание ${row + 1}-${col + 1}`}><AlignIcon col={col} row={row} /></AlignButton>
              )))}
            </AlignGrid>
            <Big $w={98}><BigIcon><TextDirIcon /></BigIcon>Направление<br />текста</Big>
            <Big $w={58}><BigIcon><MarginsIcon /></BigIcon>Поля<br />ячейки</Big>
          </GroupBody>
          <GroupFoot><GroupName>Выравнивание</GroupName></GroupFoot>
        </Group>
        <Divider />
        <Group $w={353}>
          <GroupBody $pad={12}>
            <Big $w={82}><BigIcon><SortIcon /></BigIcon>Сортировка</Big>
            <Column $ml={9}>
              <Cmd icon={<RepeatIcon />} disabled>Повторить строки заголовков</Cmd>
              <Cmd icon={<ConvertIcon />}>Преобразовать в текст</Cmd>
              <Cmd icon={<Fx>fx</Fx>}>Формула</Cmd>
            </Column>
          </GroupBody>
          <GroupFoot><GroupName>Данные</GroupName></GroupFoot>
        </Group>
        <Divider />
        <Collapse aria-label="Свернуть ленту"><Icon w={13} h={8}><path d="M.5 7 6.500 1l6 6" stroke="#555" strokeWidth="1.200" /></Icon></Collapse>
      </Ribbon>

      <RulerRow>
        <TabCorner aria-label="Позиция табуляции"><span><Icon w={8} h={8}><path d="M1.500 0v6.500H8" stroke={GREY} strokeWidth="3" /></Icon></span></TabCorner>
        <RulerHolder><HRuler /></RulerHolder>
      </RulerRow>

      <Work>
        <SideRuler><VRuler /></SideRuler>
        <Canvas>
          <Sheet>
            <MoveHandle aria-label="Переместить таблицу">
              <Icon w={15} h={15}><path d="M7.500 1v13M1 7.500h13" stroke="#555" strokeWidth="1.500" /><path d="M7.500 0l2.500 3H5zM7.500 15l2.500-3H5zM0 7.500 3 5v5zM15 7.500 12 5v5z" fill="#555" /></Icon>
            </MoveHandle>
            <DocTable>
              <tbody>
                <tr>
                  <td colSpan={10}>
                    Сдам 1-комнатную квартиру<br />
                    Сдаю на длительный срок 1-комнатную квартиру на ул. Мира.<br />
                    Площадью 37 <Misspelt>кв.м.</Misspelt>, есть мебель, квартира после ремонта.<br />
                    Без залога. Оплата 10000 рублей в месяц + к/у.<br />
                    Подробности по телефону. Посредникам просьба не беспокоить.
                  </td>
                </tr>
                <tr>
                  {Array.from({ length: 10 }, (_, i) => (
                    <Selected key={i} $first={i === 0}>
                      {DOC_LINES.map((l, n) => <React.Fragment key={n}>{n > 0 && <br />}{l}</React.Fragment>)}
                    </Selected>
                  ))}
                </tr>
              </tbody>
            </DocTable>

            <Backdrop>
              <Dialog onSubmit={(e) => e.preventDefault()}>
                <DialogTitle>
                  <DialogName>Направление текста - Ячейка таблицы</DialogName>
                  <HelpButton type="button">?</HelpButton>
                  <button type="button" aria-label="Закрыть"><Icon w={13} h={13}><path d="M.5.5l12 12M12.500.5l-12 12" stroke="#000" /></Icon></button>
                </DialogTitle>
                <DialogBody>
                  <Panels>
                    <Panel>
                      <legend><u>О</u>риентация</legend>
                      <WideChoice type="button">Текст</WideChoice>
                      <TallRow>
                        <TallChoice type="button" $on $up><span><span>Текст</span></span></TallChoice>
                        <TallChoice type="button"><span><span>Текст</span></span></TallChoice>
                      </TallRow>
                    </Panel>
                    <Panel>
                      <legend>Образец</legend>
                      <Sample><SampleText>{SAMPLE}</SampleText></Sample>
                    </Panel>
                  </Panels>
                  <ApplyRow>
                    <label htmlFor="apply">Применить:</label>
                    <ApplyBox>
                      <select id="apply" disabled />
                      <span><Icon w={9} h={6}><path d="M.5.5l4 4 4-4" stroke="#555" /></Icon></span>
                    </ApplyBox>
                  </ApplyRow>
                  <Actions>
                    <Action $main>OK</Action>
                    <Action type="button">Отмена</Action>
                  </Actions>
                </DialogBody>
              </Dialog>
            </Backdrop>

            <Mini>
              <MiniLeft>
                <MiniRow>
                  <Combo $w={106}><ComboSelect aria-label="Шрифт"><option>Calibri (Основной текст)</option></ComboSelect><Chevron /></Combo>
                  <Combo $w={68}><ComboSelect aria-label="Размер"><option>11</option></ComboSelect><Chevron /></Combo>
                  <MiniTool $w={28} aria-label="Увеличить размер">
                    <Icon w={14} h={17}><path d="M1 16 5.200 4.500h1.600L11 16M2.800 12h6.500" stroke="#666" strokeWidth="2" /><path d="M9 3h5l-2.500-3z" fill={BLUE} /></Icon>
                  </MiniTool>
                  <MiniTool $w={28} aria-label="Уменьшить размер">
                    <Icon w={14} h={17}><path d="M1 17 5.200 5.500h1.600L11 17M2.800 13h6.500" stroke="#666" strokeWidth="2" /><path d="M9 1h5l-2.500 3z" fill={BLUE} /></Icon>
                  </MiniTool>
                  <MiniTool $w={25} aria-label="Формат по образцу">
                    <Icon w={18} h={16}><path d="M0 8l7-3 5 5-4 6z" fill="#eac282" /><path d="M7.500 4l5.500 5.500" stroke="#666" strokeWidth="3.500" /><path d="M11 6l5.500-5.500" stroke="#666" strokeWidth="3.500" /></Icon>
                  </MiniTool>
                </MiniRow>
                <MiniRow>
                  <MiniTool $w={28}><b>Ж</b></MiniTool>
                  <MiniTool $w={28}><b><i>К</i></b></MiniTool>
                  <MiniTool $w={28} aria-label="По центру"><Icon w={16} h={12} crisp><path d="M3 .5h10M0 3.500h16M3 6.500h10M0 9.500h16" stroke="#666" /></Icon></MiniTool>
                  <MiniTool $w={42} aria-label="Цвет выделения">
                    <Icon w={20} h={20}><text x="0" y="8" fontSize="11" fontWeight="700" fontFamily={SANS} fill="#555">ab</text><path d="M19 2 9 12" stroke="#777" strokeWidth="3" /><path d="M4 15l3-5 3.500 3z" fill="#666" /><path d="M0 15h20v5H0z" fill="#ff0" /></Icon>
                    <Caret />
                  </MiniTool>
                  <MiniTool $w={43} aria-label="Цвет текста">
                    <Icon w={20} h={20}><path d="M5 13 9.200 1.500h1.600L15 13M6.500 9h7" stroke="#555" strokeWidth="2.200" /><path d="M0 15h20v5H0z" fill="#f00" /></Icon>
                    <Caret />
                  </MiniTool>
                  <MiniTool $w={43} aria-label="Заливка">
                    <Icon w={20} h={20}><path d="M3.500 8 10 2.500l6 5.500-6.500 6zM7.500 6V1.500a1.800 1.800 0 0 1 3.500 0V6" fill="#fff" stroke="#666" strokeWidth="1.300" /><path d="M14 4c5 1 5 4 3.500 10-2-3-1-6-3.500-7z" fill={BLUE} /><path d="M.5 16h19v3.500H.5z" fill="#fff" stroke="#999" /></Icon>
                    <Caret />
                  </MiniTool>
                  <MiniTool $w={44} $on aria-label="Границы">
                    <Icon w={17} h={17} crisp><path d="M0 0h17v17H0z" fill="#fff" /><path d="M.5.5h16v16H.5zM8.500 0v17M0 8.500h17" stroke="#666" strokeDasharray="1 1" /><path d="M0 16.500h17" stroke="#333" /></Icon>
                    <Caret />
                  </MiniTool>
                </MiniRow>
              </MiniLeft>
              <MiniBig><span><Icon w={22} h={22}><g shapeRendering="crispEdges"><Cells w={21} h={21} c={4} r={4} /><path d="M1 11h19v5H1z" fill="#c3d5e8" /></g><path d="M7 14h7v8H7z" fill="#fff" /><path d="M10.500 14v7M7.500 18l3 3 3-3" stroke={BLUE} strokeWidth="1.600" /></Icon><Caret /></span>Вставка</MiniBig>
              <MiniBig><span><Icon w={22} h={22}><g shapeRendering="crispEdges"><Cells w={21} h={21} c={4} r={4} /></g><RedX x={11} y={12} s={10} /></Icon><Caret /></span>Удалить</MiniBig>
            </Mini>

            <Menu>
              <Item icon={<ScissorsIcon />}>В<u>ы</u>резать</Item>
              <Item icon={<CopyIcon />}><u>К</u>опировать</Item>
              <MenuHead><MenuHeadIcon><PasteIcon /></MenuHeadIcon><MenuHeadText>Параметры вставки:</MenuHeadText></MenuHead>
              <PasteRow>{[0, 1, 2, 3, 4, 5].map((k) => <button key={k} aria-label={`Вариант вставки ${k + 1}`}><PasteOption kind={k} /></button>)}</PasteRow>
              <MenuRule />
              <Item after={<SubArrow />}><u>В</u>ставить</Item>
              <Item><u>У</u>далить ячейки...</Item>
              <Item icon={<MergeIcon />}>Об<u>ъ</u>единить ячейки</Item>
              <MenuRule />
              <Item after={<><SplitMark /><SubArrow /></>}><u>С</u>тили оформления границ</Item>
              <Item icon={<TextDirMenuIcon />} hot><u>Н</u>аправление текста...</Item>
              <Item icon={<PropsIcon />}><u>С</u>войства таблицы...</Item>
              <MenuRule />
              <Item icon={<CommentIcon />}>Создать примеча<u>н</u>ие</Item>
            </Menu>

            <Badge $x={729} $y={103}>1</Badge>
            <Badge $x={639} $y={489}>2</Badge>
            <Badge $x={77} $y={473}>3</Badge>
            <ArrowLayer width="660" height="400" viewBox="611 420 660 400" aria-hidden>
              <Arrow a={[1221, 420]} b={[1198, 520]} />
              <Arrow a={[1175, 779]} b={[1268, 817]} />
              <Arrow a={[612, 752]} b={[713, 741]} />
            </ArrowLayer>
          </Sheet>
        </Canvas>
      </Work>

      <Status>
        <StatusButton>Страница 1 из 1</StatusButton>
        <StatusButton $ml={26}>Число слов: 86</StatusButton>
        <StatusButton $ml={28} aria-label="Правописание"><Icon w={18} h={15}><path d="M8.500 14V1.500C7 .5 5 .5.5.5v12.500c4 0 6 0 8 1.500 1-1 2-1.500 3-1.500M8.500 1.500C10 .5 12 .5 16.500.5V3M11.500 5.500l5 5M16.500 5.500l-5 5" stroke={GREY} strokeWidth="1.200" /></Icon></StatusButton>
        <StatusButton $ml={21}>русский</StatusButton>
        <StatusButton $ml={26} aria-label="Макрос"><Icon w={16} h={15}><path d="M1.500 3.500h13v11h-13z" stroke={GREY} /><path d="M6 1h9v4H6z" fill={GREY} /><circle cx="3.500" cy="3.500" r="3.500" fill="#555" /><path d="M4 8h9M4 10.500h9M4 13h9" stroke={GREY} strokeDasharray="2 1" /></Icon></StatusButton>
        <Spacer />
        <ViewButton aria-label="Режим чтения"><Icon w={18} h={15}><path d="M8.500 13.500C7 12.500 4 12.500.5 12.500V.5c4 0 6 0 8 1 2-1 4-1 8-1v12c-3.500 0-6.500 0-8 1zV15M8.500 1.500v12M2.500 3.500h4M2.500 6h4M2.500 8.500h4M10.500 3.500h4M10.500 6h4M10.500 8.500h4" stroke={GREY} strokeWidth="1.200" /></Icon></ViewButton>
        <ViewButton $on aria-label="Разметка страницы"><Icon w={18} h={16} crisp><path d="M.5.5h16v15H.5zM2 3.500h13M2 6.500h13M2 9.500h13M2 12.500h13" stroke="#555" /></Icon></ViewButton>
        <ViewButton aria-label="Веб-документ"><Icon w={18} h={16}><path d="M8 12.500H.5V.5h13V5M2.500 3.500h9M2.500 6h8M2.500 8.500h5" stroke={GREY} strokeWidth="1.200" /><circle cx="12.500" cy="11" r="4.500" fill={GREY} /><path d="M10 9l3 1.500-1 2 3 1" stroke="#f3f3f3" /></Icon></ViewButton>
        <Zoom>
          <button aria-label="Уменьшить"><Icon w={10} h={10}><path d="M0 5h10" stroke={GREY} strokeWidth="2" /></Icon></button>
          <ZoomRange type="range" aria-label="Масштаб" defaultValue={50} />
          <button aria-label="Увеличить"><Icon w={10} h={10}><path d="M0 5h10M5 0v10" stroke={GREY} strokeWidth="2" /></Icon></button>
        </Zoom>
        <StatusButton>100 %</StatusButton>
      </Status>
    </Window>
  );
}
